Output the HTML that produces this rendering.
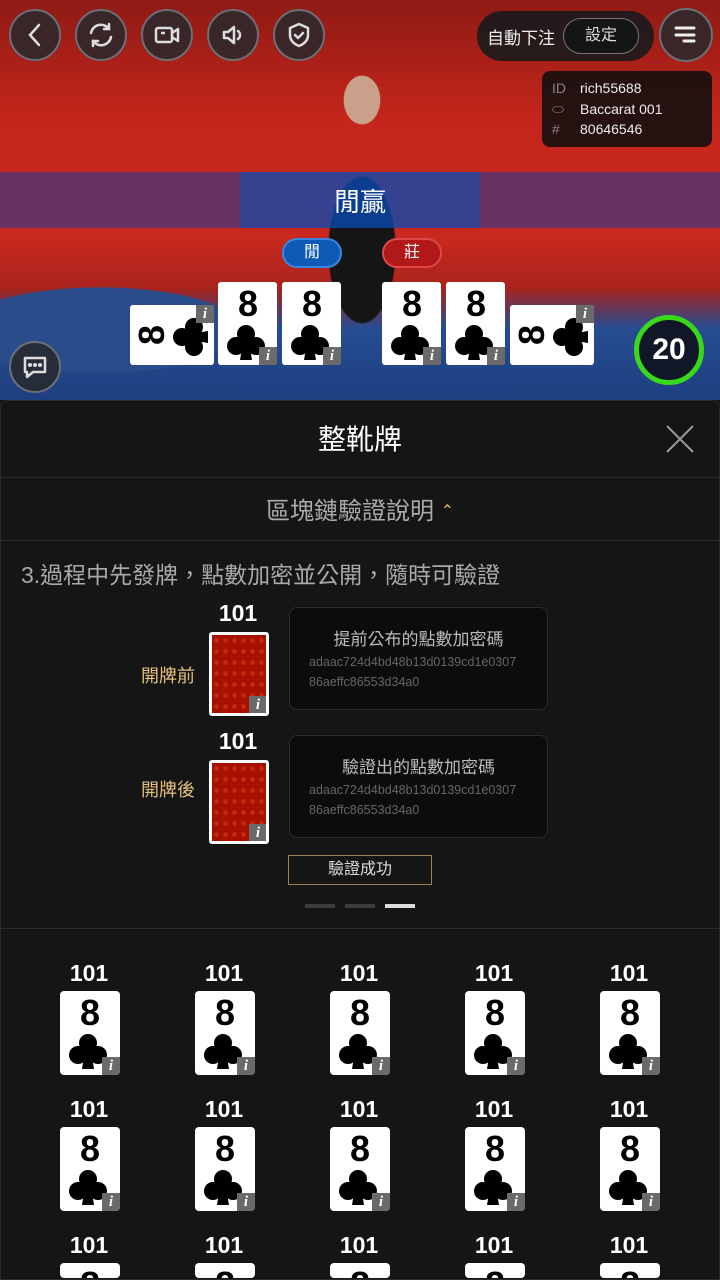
<!DOCTYPE html>
<html><head><meta charset="utf-8">
<style>
*{margin:0;padding:0;box-sizing:border-box}
html,body{width:720px;height:1280px;overflow:hidden}
body{background:#161616;font-family:"Liberation Sans","Noto Sans CJK TC",sans-serif}
#root{position:relative;width:720px;height:1280px;overflow:hidden}
.abs{position:absolute}
.video{left:0;top:0;width:720px;height:400px;overflow:hidden;
background:
radial-gradient(ellipse 55px 120px at 362px 250px,#151515 60%,transparent 62%),
radial-gradient(ellipse 30px 40px at 362px 100px,#c9a08a 60%,transparent 62%),
radial-gradient(ellipse 200px 60px at 100px 330px,#2a4c8a 70%,transparent 72%),
linear-gradient(180deg,#8e1a14 0%,#c5261b 30%,#c8281e 60%,#a9231c 72%,#264c92 82%,#1e3f80 100%);}
.btn{width:52px;height:52px;border-radius:50%;background:rgba(40,40,44,.85);border:2px solid #6b6f78;top:9px}
.btn svg{position:absolute;left:10px;top:10px}
.card{background:#fff;border-radius:3px;overflow:hidden}
.ii{position:absolute;right:0;bottom:0;width:18px;height:18px;background:#6a6a6a;color:#fff;font:italic bold 15px "Liberation Serif",serif;text-align:center;line-height:18px}
.gc{position:absolute;width:60px;height:84px;background:#fff;border-radius:4px;overflow:hidden}
.n{position:absolute;left:0;width:60px;top:4px;text-align:center;font:bold 36px "Liberation Sans",sans-serif;color:#000;line-height:36px}
.cl{position:absolute;left:8px;top:42px}
.gl{position:absolute;width:60px;text-align:center;font:bold 23px "Liberation Sans",sans-serif;color:#fff}
.box{border:1px solid #2b2b2b;background:#0c0c0c;border-radius:8px}
.back{background:#a81000;border:3px solid #fff;border-radius:3px;overflow:hidden;
background-image:radial-gradient(circle,#c82a10 2px,transparent 2.5px);background-size:9px 11px}
.side{position:absolute;left:12px;top:-12px;width:60px;height:84px;transform:rotate(-90deg)}
</style></head><body><div id="root">
<svg width="0" height="0" style="position:absolute"><defs><g id="club"><circle cx="20" cy="10" r="9"/><circle cx="10" cy="22" r="9"/><circle cx="30" cy="22" r="9"/><path d="M17 18h6l3 18h-12z"/></g></defs></svg>
<div class="abs video">
 <div class="abs" style="left:0;top:172px;width:720px;height:56px;background:rgba(10,60,170,.5)"></div>
 <div class="abs" style="left:240px;top:172px;width:240px;height:56px;background:rgba(10,80,180,.55)"></div>
 <div class="abs" style="left:0;top:182px;width:720px;text-align:center;color:#fff;font-size:26px">閒贏</div>
 <div class="abs" style="left:282px;top:238px;width:60px;height:30px;border-radius:15px;background:#0d5bb5;border:2px solid #3a86e0;color:#fff;font-size:16px;text-align:center;line-height:26px">閒</div>
 <div class="abs" style="left:382px;top:238px;width:60px;height:30px;border-radius:15px;background:#b11818;border:2px solid #e04848;color:#fff;font-size:16px;text-align:center;line-height:26px">莊</div>
</div>
<div class="abs btn" style="left:9px"><svg width="28" height="28" viewBox="0 0 28 28" fill="none" stroke="#ddd" stroke-width="2.5" stroke-linecap="round"><path d="M18 4L9 14l9 10"/></svg></div>
<div class="abs btn" style="left:75px"><svg width="28" height="28" viewBox="0 0 28 28" fill="none" stroke="#ddd" stroke-width="2.5" stroke-linecap="round"><path d="M4 12a10 10 0 0 1 18-4M24 16a10 10 0 0 1-18 4"/><path d="M22 3v5h-5M6 25v-5h5"/></svg></div>
<div class="abs btn" style="left:141px"><svg width="28" height="28" viewBox="0 0 28 28" fill="none" stroke="#ddd" stroke-width="2.5" stroke-linejoin="round"><rect x="3" y="7" width="16" height="14" rx="2"/><path d="M19 12l6-4v12l-6-4"/><path d="M8 12h4"/></svg></div>
<div class="abs btn" style="left:207px"><svg width="28" height="28" viewBox="0 0 28 28" fill="none" stroke="#ddd" stroke-width="2.5" stroke-linejoin="round"><path d="M5 11h4l6-5v16l-6-5H5z"/><path d="M19 10a5 5 0 0 1 0 8" stroke-linecap="round"/></svg></div>
<div class="abs btn" style="left:273px"><svg width="28" height="28" viewBox="0 0 28 28" fill="none" stroke="#ddd" stroke-width="2.5" stroke-linejoin="round"><path d="M14 3l9 4v7c0 6-4 9-9 11-5-2-9-5-9-11V7z"/><path d="M10 14l3 3 5-5" stroke-linecap="round"/></svg></div>
<div class="abs" style="left:477px;top:11px;width:177px;height:50px;border-radius:25px;background:rgba(25,25,28,.9)"></div>
<div class="abs" style="left:487px;top:24px;color:#eee;font-size:17px">自動下注</div>
<div class="abs" style="left:563px;top:18px;width:76px;height:36px;border-radius:18px;border:1px solid #777;background:#151515;color:#ddd;font-size:16px;text-align:center;line-height:34px">設定</div>
<div class="abs btn" style="left:659px;width:54px;height:54px;top:8px"><svg width="28" height="28" viewBox="0 0 28 28" stroke="#eee" stroke-width="3" stroke-linecap="round"><path d="M5 8h18M5 15h18M13 21h10"/></svg></div>
<div class="abs" style="left:542px;top:71px;width:170px;height:76px;border-radius:8px;background:rgba(15,15,15,.88);color:#eee;font-size:14px;line-height:20.5px;padding:7px 0 0 10px">
<div><span style="color:#888;display:inline-block;width:28px">ID</span>rich55688</div>
<div><span style="color:#888;display:inline-block;width:28px">⬭</span>Baccarat 001</div>
<div><span style="color:#888;display:inline-block;width:28px">#</span>80646546</div></div>
<div class="abs card" style="left:130px;top:305px;width:84px;height:60px"><div class="side"><div class="n">8</div><svg class="cl" width="40" height="38" viewBox="0 0 40 38"><use href="#club"/></svg></div><div class="ii" style="top:0;bottom:auto">i</div></div>
<div class="abs card" style="left:218px;top:282px;width:59px;height:83px"><div class="n">8</div><svg class="cl" width="40" height="38" viewBox="0 0 40 38"><use href="#club"/></svg><div class="ii">i</div></div>
<div class="abs card" style="left:282px;top:282px;width:59px;height:83px"><div class="n">8</div><svg class="cl" width="40" height="38" viewBox="0 0 40 38"><use href="#club"/></svg><div class="ii">i</div></div>
<div class="abs card" style="left:382px;top:282px;width:59px;height:83px"><div class="n">8</div><svg class="cl" width="40" height="38" viewBox="0 0 40 38"><use href="#club"/></svg><div class="ii">i</div></div>
<div class="abs card" style="left:446px;top:282px;width:59px;height:83px"><div class="n">8</div><svg class="cl" width="40" height="38" viewBox="0 0 40 38"><use href="#club"/></svg><div class="ii">i</div></div>
<div class="abs card" style="left:510px;top:305px;width:84px;height:60px"><div class="side"><div class="n">8</div><svg class="cl" width="40" height="38" viewBox="0 0 40 38"><use href="#club"/></svg></div><div class="ii" style="top:0;bottom:auto">i</div></div>
<div class="abs" style="left:634px;top:315px;width:70px;height:70px;border-radius:50%;border:5px solid #3ad81a;background:#101828;color:#fff;font:bold 30px 'Liberation Sans';text-align:center;line-height:60px">20</div>
<div class="abs btn" style="left:9px;top:341px"><svg width="28" height="28" viewBox="0 0 28 28" fill="none" stroke="#ddd" stroke-width="2.5" stroke-linejoin="round"><path d="M4 5h20v14H12l-6 5v-5H4z"/><circle cx="9" cy="12" r=".8" fill="#ddd"/><circle cx="14" cy="12" r=".8" fill="#ddd"/><circle cx="19" cy="12" r=".8" fill="#ddd"/></svg></div>
<div class="abs" style="left:0;top:400px;width:720px;height:880px;background:#151515;border:1px solid #2a2a2a;border-radius:8px 8px 0 0"></div>
<div class="abs" style="left:0;top:418px;width:720px;text-align:center;color:#fff;font-size:28px">整靴牌</div>
<svg class="abs" style="left:666px;top:425px" width="28" height="28" stroke="#999" stroke-width="2"><path d="M1 1l26 26M27 1L1 27"/></svg>
<div class="abs" style="left:0;top:477px;width:720px;height:1px;background:#2a2a2a"></div>
<div class="abs" style="left:0;top:491px;width:720px;text-align:center;color:#aaa;font-size:24px">區塊鏈驗證說明 <span style="color:#e8b860;font-size:16px;position:relative;top:-3px">⌃</span></div>
<div class="abs" style="left:0;top:540px;width:720px;height:1px;background:#2a2a2a"></div>
<div class="abs" style="left:21px;top:556px;color:#aaa;font-size:23px">3.過程中先發牌，點數加密並公開，隨時可驗證</div>
<div class="abs" style="left:208px;top:600px;width:60px;text-align:center;color:#fff;font:bold 23px 'Liberation Sans'">101</div>
<div class="abs" style="left:208px;top:728px;width:60px;text-align:center;color:#fff;font:bold 23px 'Liberation Sans'">101</div>
<div class="abs" style="left:141px;top:662px;color:#e5c07b;font-size:18px">開牌前</div>
<div class="abs" style="left:141px;top:776px;color:#e5c07b;font-size:18px">開牌後</div>
<div class="abs back" style="left:209px;top:632px;width:60px;height:84px"><div class="ii" style="right:-1px;bottom:-1px">i</div></div>
<div class="abs back" style="left:209px;top:760px;width:60px;height:84px"><div class="ii" style="right:-1px;bottom:-1px">i</div></div>
<div class="abs box" style="left:289px;top:607px;width:259px;height:103px"></div>
<div class="abs" style="left:289px;top:625px;width:259px;text-align:center;color:#bbb;font-size:17px">提前公布的點數加密碼</div>
<div class="abs" style="left:309px;top:652px;color:#666;font-size:12.5px;line-height:20px">adaac724d4bd48b13d0139cd1e0307<br>86aeffc86553d34a0</div>
<div class="abs box" style="left:289px;top:735px;width:259px;height:103px"></div>
<div class="abs" style="left:289px;top:753px;width:259px;text-align:center;color:#bbb;font-size:17px">驗證出的點數加密碼</div>
<div class="abs" style="left:309px;top:780px;color:#666;font-size:12.5px;line-height:20px">adaac724d4bd48b13d0139cd1e0307<br>86aeffc86553d34a0</div>
<div class="abs" style="left:288px;top:855px;width:144px;height:30px;border:1px solid #9a8350;color:#ddd;font-size:16px;text-align:center;line-height:28px">驗證成功</div>
<div class="abs" style="left:305px;top:904px;width:30px;height:4px;background:#3c3c3c"></div>
<div class="abs" style="left:345px;top:904px;width:30px;height:4px;background:#3c3c3c"></div>
<div class="abs" style="left:385px;top:904px;width:30px;height:4px;background:#ddd"></div>
<div class="abs" style="left:0;top:928px;width:720px;height:1px;background:#2a2a2a"></div>

<div class="gl" style="left:59px;top:960px">101</div><div class="gc" style="left:60px;top:991px"><div class="n">8</div><svg class="cl" width="40" height="38" viewBox="0 0 40 38"><use href="#club"/></svg><div class="ii">i</div></div>
<div class="gl" style="left:194px;top:960px">101</div><div class="gc" style="left:195px;top:991px"><div class="n">8</div><svg class="cl" width="40" height="38" viewBox="0 0 40 38"><use href="#club"/></svg><div class="ii">i</div></div>
<div class="gl" style="left:329px;top:960px">101</div><div class="gc" style="left:330px;top:991px"><div class="n">8</div><svg class="cl" width="40" height="38" viewBox="0 0 40 38"><use href="#club"/></svg><div class="ii">i</div></div>
<div class="gl" style="left:464px;top:960px">101</div><div class="gc" style="left:465px;top:991px"><div class="n">8</div><svg class="cl" width="40" height="38" viewBox="0 0 40 38"><use href="#club"/></svg><div class="ii">i</div></div>
<div class="gl" style="left:599px;top:960px">101</div><div class="gc" style="left:600px;top:991px"><div class="n">8</div><svg class="cl" width="40" height="38" viewBox="0 0 40 38"><use href="#club"/></svg><div class="ii">i</div></div>

<div class="gl" style="left:59px;top:1096px">101</div><div class="gc" style="left:60px;top:1127px"><div class="n">8</div><svg class="cl" width="40" height="38" viewBox="0 0 40 38"><use href="#club"/></svg><div class="ii">i</div></div>
<div class="gl" style="left:194px;top:1096px">101</div><div class="gc" style="left:195px;top:1127px"><div class="n">8</div><svg class="cl" width="40" height="38" viewBox="0 0 40 38"><use href="#club"/></svg><div class="ii">i</div></div>
<div class="gl" style="left:329px;top:1096px">101</div><div class="gc" style="left:330px;top:1127px"><div class="n">8</div><svg class="cl" width="40" height="38" viewBox="0 0 40 38"><use href="#club"/></svg><div class="ii">i</div></div>
<div class="gl" style="left:464px;top:1096px">101</div><div class="gc" style="left:465px;top:1127px"><div class="n">8</div><svg class="cl" width="40" height="38" viewBox="0 0 40 38"><use href="#club"/></svg><div class="ii">i</div></div>
<div class="gl" style="left:599px;top:1096px">101</div><div class="gc" style="left:600px;top:1127px"><div class="n">8</div><svg class="cl" width="40" height="38" viewBox="0 0 40 38"><use href="#club"/></svg><div class="ii">i</div></div>

<div class="gl" style="left:59px;top:1232px">101</div><div class="gc" style="left:60px;top:1263px;height:15px"><div class="n">8</div></div>
<div class="gl" style="left:194px;top:1232px">101</div><div class="gc" style="left:195px;top:1263px;height:15px"><div class="n">8</div></div>
<div class="gl" style="left:329px;top:1232px">101</div><div class="gc" style="left:330px;top:1263px;height:15px"><div class="n">8</div></div>
<div class="gl" style="left:464px;top:1232px">101</div><div class="gc" style="left:465px;top:1263px;height:15px"><div class="n">8</div></div>
<div class="gl" style="left:599px;top:1232px">101</div><div class="gc" style="left:600px;top:1263px;height:15px"><div class="n">8</div></div>
</div></body></html>
